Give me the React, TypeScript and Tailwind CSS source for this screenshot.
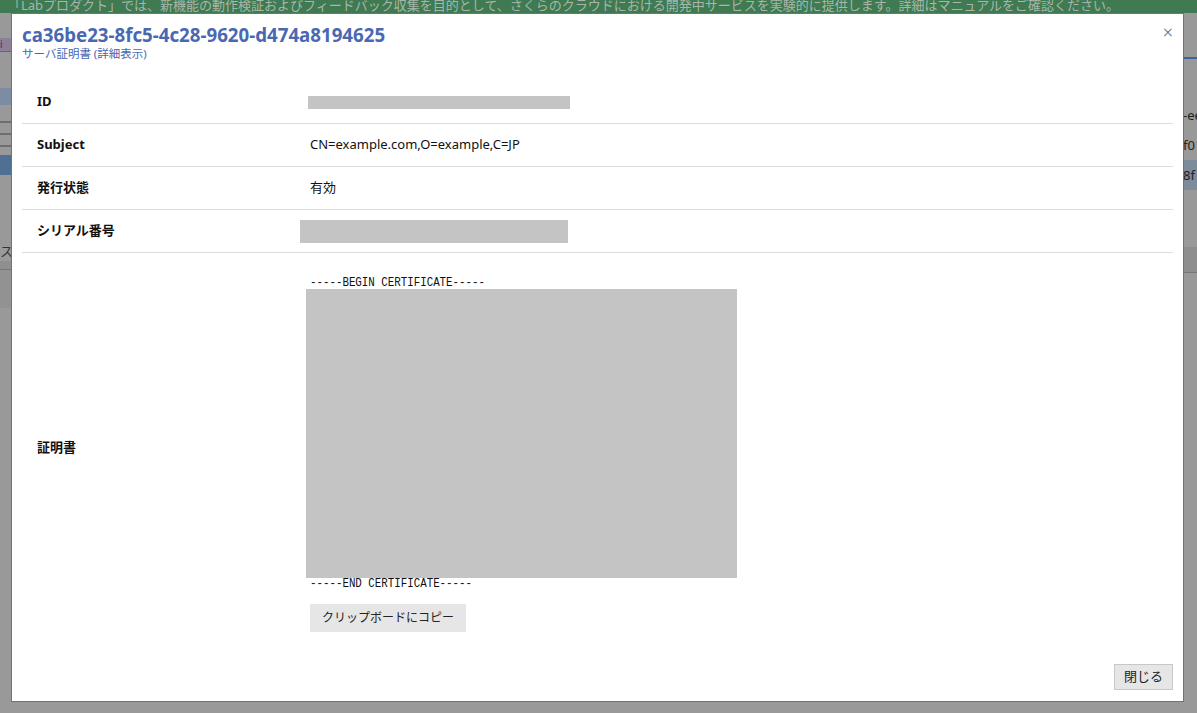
export default function App() {
  const rows = [
    { label: "ID", value: <div className="-ml-[2px] w-[262px] h-[13px] bg-[#c4c4c4]" /> },
    { label: "Subject", value: <span>CN=example.com,O=example,C=JP</span> },
    { label: "発行状態", value: <span>有効</span> },
    { label: "シリアル番号", value: <div className="-ml-[10px] w-[268px] h-[23px] bg-[#c4c4c4]" /> },
  ];

  return (
    <div
      className="relative w-[1197px] h-[713px] overflow-hidden bg-[#999999] text-[13px] text-[#111]"
      style={{ fontFamily: '"Noto Sans", "Noto Sans CJK JP", sans-serif' }}
    >
      {/* dimmed page behind the dialog */}
      <div className="h-[13px] bg-[#3f7a52] overflow-hidden">
        <div className="pl-[8px] -mt-[4px] text-[13px] leading-[18px] text-[#a7b7aa] whitespace-nowrap">
          「Labプロダクト」では、新機能の動作検証およびフィードバック収集を目的として、さくらのクラウドにおける開発中サービスを実験的に提供します。詳細はマニュアルをご確認ください。
        </div>
      </div>
      <div className="flex justify-between h-[700px]">
        <div className="w-[11px] flex flex-col">
          <div className="h-[25px]" />
          <div className="h-[13px] bg-[#8d7f96] text-[10px] leading-[13px] text-[#4a2f6a]">i</div>
          <div className="h-[1px] bg-[#4d6a94]" />
          <div className="h-[36px]" />
          <div className="h-[17px] bg-[#7b8ca3]" />
          <div className="h-[16px]" />
          <div className="h-[2px] bg-[#6e6e6e]" />
          <div className="h-[10px]" />
          <div className="h-[2px] bg-[#6e6e6e]" />
          <div className="h-[10px]" />
          <div className="h-[2px] bg-[#6e6e6e]" />
          <div className="h-[8px]" />
          <div className="h-[20px] bg-[#4f6f93]" />
          <div className="h-[66px]" />
          <div className="h-[20px] text-[13px] leading-[20px] text-[#333]">ス</div>
          <div className="h-[8px] bg-[#8f8f8f]" />
          <div className="h-[1px] bg-[#777]" />
          <div className="h-[38px] bg-[#929292]" />
        </div>
        <div className="w-[14px] flex flex-col">
          <div className="h-[12px]" />
          <div className="h-[32px]" />
          <div className="h-[2px] bg-[#3d6499]" />
          <div className="h-[41px]" />
          <div className="h-[30px] text-[13px] leading-[30px] text-[#222] whitespace-nowrap">-ee</div>
          <div className="h-[30px] text-[13px] leading-[30px] text-[#222] whitespace-nowrap">f0</div>
          <div className="h-[30px] bg-[#7e8b9a] text-[13px] leading-[30px] text-[#222] whitespace-nowrap">8f</div>
          <div className="h-[57px]" />
          <div className="h-[25px] bg-[#8e8e8e]" />
          <div className="h-[1px] bg-[#777]" />
        </div>
      </div>

      {/* dialog */}
      <div className="absolute left-[11px] top-[13px] w-[1173px] h-[689px] bg-white border border-[#5a72b6] flex flex-col">
        <div className="relative px-[10px] pt-[10px]">
          <div className="text-[18.7px] leading-[22px] font-bold text-[#4a68b2]">ca36be23-8fc5-4c28-9620-d474a8194625</div>
          <div className="text-[11.5px] leading-[16px] text-[#4a68b2]">サーバ証明書 (詳細表示)</div>
          <button className="absolute right-[10px] top-[9px] text-[18px] leading-[18px] font-light text-[#666]">×</button>
        </div>

        <div className="mx-[10px] mt-[19px]">
          {rows.map((r) => (
            <div key={r.label} className="flex items-center h-[43px] border-b border-[#dcdcdc]">
              <div className="w-[288px] pl-[15px] font-bold">{r.label}</div>
              <div className="flex-1">{r.value}</div>
            </div>
          ))}
          <div className="flex items-center">
            <div className="w-[288px] pl-[15px] font-bold">証明書</div>
            <div className="flex-1 pt-[24px] pb-[11px]">
              <div
                className="text-[12px] leading-[12px] text-[#111] scale-x-[0.9] origin-left"
                style={{ fontFamily: '"Liberation Mono", monospace' }}
              >
                -----BEGIN CERTIFICATE-----
              </div>
              <div className="-ml-[4px] w-[431px] h-[289px] bg-[#c4c4c4]" />
              <div
                className="text-[12px] leading-[12px] text-[#111] scale-x-[0.9] origin-left"
                style={{ fontFamily: '"Liberation Mono", monospace' }}
              >
                -----END CERTIFICATE-----
              </div>
              <button className="mt-[14px] h-[28px] px-[12px] bg-[#e6e6e6] text-[12px] text-[#222]">
                クリップボードにコピー
              </button>
            </div>
          </div>
        </div>

        <div className="mt-auto flex justify-end px-[10px] pb-[11px]">
          <button className="h-[26px] w-[59px] bg-[#e6e6e6] border border-[#c8c8c8] text-[13px] text-[#222]">閉じる</button>
        </div>
      </div>
    </div>
  );
}
